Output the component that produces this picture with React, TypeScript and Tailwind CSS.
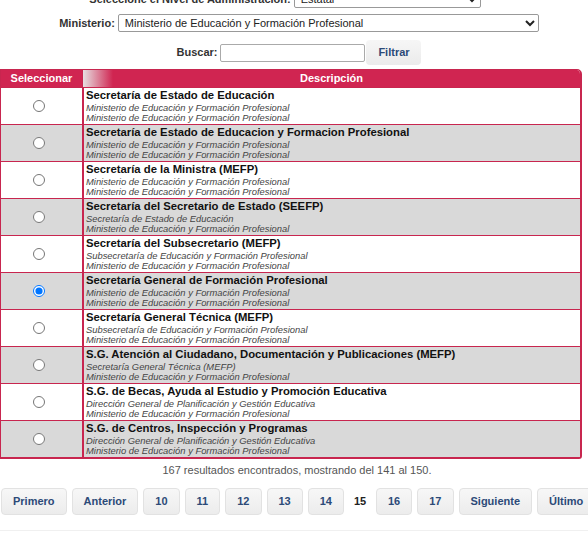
import React, { useState } from 'react';

type Row = { title: string; sub1: string; sub2: string };

const rows: Row[] = [
  { title: 'Secretaría de Estado de Educación', sub1: 'Ministerio de Educación y Formación Profesional', sub2: 'Ministerio de Educación y Formación Profesional' },
  { title: 'Secretaría de Estado de Educacion y Formacion Profesional', sub1: 'Ministerio de Educación y Formación Profesional', sub2: 'Ministerio de Educación y Formación Profesional' },
  { title: 'Secretaría de la Ministra (MEFP)', sub1: 'Ministerio de Educación y Formación Profesional', sub2: 'Ministerio de Educación y Formación Profesional' },
  { title: 'Secretaría del Secretario de Estado (SEEFP)', sub1: 'Secretaría de Estado de Educación', sub2: 'Ministerio de Educación y Formación Profesional' },
  { title: 'Secretaría del Subsecretario (MEFP)', sub1: 'Subsecretaría de Educación y Formación Profesional', sub2: 'Ministerio de Educación y Formación Profesional' },
  { title: 'Secretaría General de Formación Profesional', sub1: 'Ministerio de Educación y Formación Profesional', sub2: 'Ministerio de Educación y Formación Profesional' },
  { title: 'Secretaría General Técnica (MEFP)', sub1: 'Subsecretaría de Educación y Formación Profesional', sub2: 'Ministerio de Educación y Formación Profesional' },
  { title: 'S.G. Atención al Ciudadano, Documentación y Publicaciones (MEFP)', sub1: 'Secretaría General Técnica (MEFP)', sub2: 'Ministerio de Educación y Formación Profesional' },
  { title: 'S.G. de Becas, Ayuda al Estudio y Promoción Educativa', sub1: 'Dirección General de Planificación y Gestión Educativa', sub2: 'Ministerio de Educación y Formación Profesional' },
  { title: 'S.G. de Centros, Inspección y Programas', sub1: 'Dirección General de Planificación y Gestión Educativa', sub2: 'Ministerio de Educación y Formación Profesional' },
];

const pages = ['10', '11', '12', '13', '14'];
const pagesAfter = ['16', '17'];

function PageButton({ label }: { label: string }) {
  return (
    <button className="h-[27px] shrink-0 rounded-[4px] border border-[#e2e2e2] bg-[linear-gradient(#f7f7f7,#ececec)] px-[11px] text-[11px] font-bold text-[#2c4a78]">
      {label}
    </button>
  );
}

export default function App() {
  const [selected, setSelected] = useState(5);

  return (
    <div className="h-[540px] w-[588px] overflow-hidden bg-white font-['Liberation_Sans',Arial,sans-serif] text-[#333]">
      {/* Nivel */}
      <div className="-mt-[10px] flex h-[18px] items-center justify-center gap-[3px] pr-[18px]">
        <span className="text-[11px] font-bold">Seleccione el Nivel de Administración:</span>
        <select className="h-[18px] w-[187px] rounded-[2px] border border-[#999] bg-white px-[2px] text-[11px] text-[#222]" defaultValue="Estatal">
          <option>Estatal</option>
        </select>
      </div>

      {/* Ministerio */}
      <div className="mt-[6px] flex h-[18px] items-center justify-center gap-[3px] pl-[10px]">
        <span className="text-[11px] font-bold">Ministerio:</span>
        <select className="h-[18px] w-[421px] rounded-[2px] border border-[#999] bg-white px-[2px] text-[11px] text-[#222]" defaultValue="m">
          <option value="m">Ministerio de Educación y Formación Profesional</option>
        </select>
      </div>

      {/* Buscar */}
      <div className="mt-[8px] flex h-[25px] items-center justify-center pl-[10px]">
        <span className="mr-[3px] text-[11px] font-bold">Buscar:</span>
        <input className="h-[18px] w-[145px] rounded-[2px] border border-[#aaa] bg-white" />
        <button className="ml-[1px] h-[25px] w-[55px] rounded-[4px] bg-[linear-gradient(#f6f6f6,#ebebeb)] text-[11px] font-bold text-[#2c4a78]">
          Filtrar
        </button>
      </div>

      {/* Tabla */}
      <div className="mt-[4px] w-[582px] overflow-hidden rounded-tr-[5px] rounded-br-[3px] border border-r-2 border-b-2 border-[#c8264f]">
        <div className="grid h-[17px] grid-cols-[81px_1fr] text-[11px] font-bold text-white">
          <div className="flex items-center justify-center bg-[#d02551]">Seleccionar</div>
          <div className="flex items-center justify-center border-l border-[#c8264f] bg-[linear-gradient(90deg,#e6dfe1,#d02551_30px)]">
            Descripción
          </div>
        </div>
        {rows.map((r, i) => (
          <div
            key={i}
            className={`grid h-[37px] grid-cols-[81px_1fr] border-t border-[#c8264f] ${i % 2 === 1 ? 'bg-[#d9d9d9]' : 'bg-white'}`}
          >
            <div className="flex items-center justify-center pr-[5px]">
              <input
                type="radio"
                name="sel"
                checked={selected === i}
                onChange={() => setSelected(i)}
                className="m-0 h-[12px] w-[12px]"
              />
            </div>
            <div className="border-l-2 border-[#c8264f] pl-[2px] pt-[1px]">
              <div className="h-[12px] whitespace-nowrap text-[11.3px] leading-[12px] font-bold text-[#111]">{r.title}</div>
              <div className="mt-[2px] h-[10px] whitespace-nowrap text-[9.4px] leading-[10px] italic text-[#444]">{r.sub1}</div>
              <div className="h-[10px] whitespace-nowrap text-[9.4px] leading-[10px] italic text-[#444]">{r.sub2}</div>
            </div>
          </div>
        ))}
      </div>

      {/* Resultados */}
      <div className="mt-[3px] pl-[6px] text-center text-[11px] text-[#555]">
        167 resultados encontrados, mostrando del 141 al 150.
      </div>

      {/* Paginación */}
      <div className="mt-[9px] flex gap-[5px] pl-[1px]">
        <PageButton label="Primero" />
        <PageButton label="Anterior" />
        {pages.map((p) => (
          <PageButton key={p} label={p} />
        ))}
        <span className="flex h-[27px] w-[22px] shrink-0 items-center justify-center bg-white text-[11px] font-bold text-[#222]">
          15
        </span>
        {pagesAfter.map((p) => (
          <PageButton key={p} label={p} />
        ))}
        <PageButton label="Siguiente" />
        <PageButton label="Último" />
      </div>

      <div className="mt-[15px] border-t border-[#f0f0f0]" />
    </div>
  );
}
